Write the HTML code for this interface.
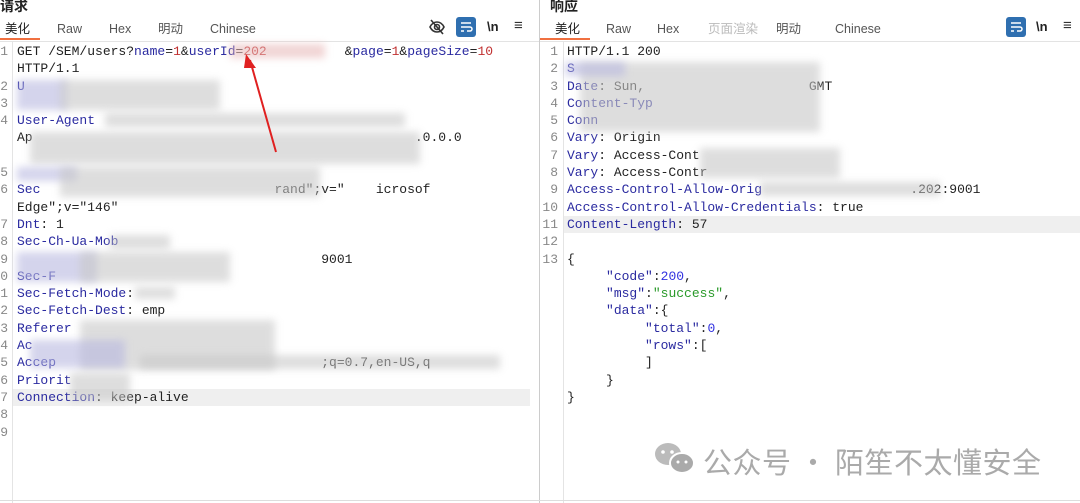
<!DOCTYPE html><html><head><meta charset="utf-8"><style>
*{margin:0;padding:0;box-sizing:border-box}
body{width:1080px;height:503px;background:#fff;position:relative;overflow:hidden;font-family:"Liberation Sans","Noto Sans CJK SC",sans-serif}
.t{position:absolute;font-size:14px;font-weight:bold;color:#222;top:-4px}
.tab{position:absolute;top:21px;font-size:12.5px;line-height:16px;height:16px;color:#555}
.ul{position:absolute;top:38px;height:2px;background:#f07040}
.hl{position:absolute;height:1px;background:#e3e3e3}
.code{position:absolute;font-family:"Liberation Mono",monospace;font-size:13px;line-height:17.3px;color:#222;white-space:pre}
.num{position:absolute;font-family:"Liberation Mono",monospace;font-size:13px;line-height:17.3px;color:#888;white-space:pre;text-align:right}
.k{color:#2a2aa0}.r{color:#c03030}.g{color:#2a9a2a}.b{color:#3030e0}
.bl{position:absolute;background:#c8c8c8;filter:blur(4px);opacity:.6}
.bb{position:absolute;background:#b8b8e0;filter:blur(4px);opacity:.6}
</style></head><body>
<div class="t" style="left:0">请求</div>
<div class="t" style="left:550px">响应</div>
<div class="tab" style="left:5px;color:#222">美化</div><div class="tab" style="left:57px">Raw</div><div class="tab" style="left:109px">Hex</div><div class="tab" style="left:158px">明动</div><div class="tab" style="left:210px">Chinese</div>
<div class="ul" style="left:0;width:40px"></div>
<div class="tab" style="left:555px;color:#222">美化</div><div class="tab" style="left:606px">Raw</div><div class="tab" style="left:657px">Hex</div><div class="tab" style="left:708px;color:#bbb">页面渲染</div><div class="tab" style="left:776px">明动</div><div class="tab" style="left:835px">Chinese</div>
<div class="ul" style="left:540px;width:50px"></div>
<div class="hl" style="left:0;top:41px;width:1080px"></div>
<svg style="position:absolute;left:428px;top:18px" width="18" height="18" viewBox="0 0 18 18"><path d="M2 9c2-4 5-5 7-5s5 1 7 5c-2 4-5 5-7 5S4 13 2 9z" fill="none" stroke="#333" stroke-width="1.6"/><circle cx="9" cy="9" r="2.5" fill="none" stroke="#333" stroke-width="1.6"/><path d="M3 2l12 14" stroke="#333" stroke-width="1.6"/></svg>
<svg style="position:absolute;left:456px;top:17px" width="20" height="20"><rect width="20" height="20" rx="3" fill="#2f6fb0"/><path d="M5 6h10M5 10h9a2 2 0 0 1 0 4h-3M5 14h3" stroke="#fff" stroke-width="1.5" fill="none"/></svg>
<div style="position:absolute;left:487px;top:19px;font-size:13px;font-weight:bold;color:#222">\n</div>
<div style="position:absolute;left:514px;top:17px;font-size:15px;color:#333">≡</div>
<svg style="position:absolute;left:1006px;top:17px" width="20" height="20"><rect width="20" height="20" rx="3" fill="#2f6fb0"/><path d="M5 6h10M5 10h9a2 2 0 0 1 0 4h-3M5 14h3" stroke="#fff" stroke-width="1.5" fill="none"/></svg>
<div style="position:absolute;left:1036px;top:19px;font-size:13px;font-weight:bold;color:#222">\n</div>
<div style="position:absolute;left:1063px;top:17px;font-size:15px;color:#333">≡</div>
<div style="position:absolute;left:539px;top:0;width:1px;height:503px;background:#ccc"></div>
<div style="position:absolute;left:12px;top:42px;width:1px;height:461px;background:#e4e4e4"></div>
<div style="position:absolute;left:563px;top:42px;width:1px;height:461px;background:#e4e4e4"></div>
<div style="position:absolute;left:0;top:500px;width:1080px;height:1px;background:#ddd"></div>
<div style="position:absolute;left:13px;top:389px;width:517px;height:17px;background:#efefef"></div>
<div style="position:absolute;left:564px;top:216px;width:516px;height:17px;background:#efefef"></div>
<div class="num" style="left:-2px;top:43px;width:10px">1

2
3
4


5
6

7
8
9
0
1
2
3
4
5
6
7
8
9</div>
<div class="code" style="left:17px;top:43px">GET /SEM/users?<span class="k">name</span>=<span class="r">1</span>&amp;<span class="k">userId</span>=<span class="r">202</span>          &amp;<span class="k">page</span>=<span class="r">1</span>&amp;<span class="k">pageSize</span>=<span class="r">10</span>
HTTP/1.1
<span class="k">U</span>

<span class="k">User-Agent</span>
Ap                                                 .0.0.0


<span class="k">Sec</span>                              rand";v="    icrosof
Edge";v="146"
<span class="k">Dnt</span>: 1
<span class="k">Sec-Ch-Ua-Mob</span>
                                       9001
<span class="k">Sec-F</span>
<span class="k">Sec-Fetch-Mode</span>:
<span class="k">Sec-Fetch-Dest</span>: emp
<span class="k">Referer</span>
<span class="k">Ac</span>
<span class="k">Accep</span>                                  ;q=0.7,en-US,q
<span class="k">Priorit</span>
<span class="k">Connection</span>: keep-alive</div>
<div class="bl" style="left:230px;top:44px;width:95px;height:14px;background:#e8b8b8"></div>
<div class="bb" style="left:17px;top:80px;width:50px;height:30px"></div>
<div class="bl" style="left:60px;top:80px;width:160px;height:30px"></div>
<div class="bl" style="left:105px;top:113px;width:300px;height:14px"></div>
<div class="bl" style="left:30px;top:132px;width:390px;height:32px"></div>
<div class="bb" style="left:17px;top:167px;width:60px;height:14px"></div>
<div class="bl" style="left:60px;top:167px;width:260px;height:30px"></div>
<div class="bl" style="left:110px;top:235px;width:60px;height:14px"></div>
<div class="bb" style="left:17px;top:252px;width:80px;height:30px"></div>
<div class="bl" style="left:80px;top:252px;width:150px;height:30px"></div>
<div class="bl" style="left:135px;top:287px;width:40px;height:12px"></div>
<div class="bl" style="left:80px;top:320px;width:195px;height:50px"></div>
<div class="bb" style="left:30px;top:340px;width:95px;height:28px"></div>
<div class="bl" style="left:140px;top:355px;width:360px;height:14px"></div>
<div class="bl" style="left:70px;top:373px;width:60px;height:28px"></div>
<svg style="position:absolute;left:238px;top:52px" width="50" height="105"><path d="M38 100L12 8" stroke="#e02020" stroke-width="2"/><path d="M8 2l10 14-12 0z" fill="#e02020"/></svg>
<div class="num" style="left:540px;top:43px;width:18px">1
2
3
4
5
6
7
8
9
10
11
12
13</div>
<div class="code" style="left:567px;top:43px">HTTP/1.1 200
<span class="k">S</span>
<span class="k">Date</span>: Sun,                     GMT
<span class="k">Content-Typ</span>
<span class="k">Conn</span>
<span class="k">Vary</span>: Origin
<span class="k">Vary</span>: Access-Cont
<span class="k">Vary</span>: Access-Contr
<span class="k">Access-Control-Allow-Orig</span>                   .202:9001
<span class="k">Access-Control-Allow-Credentials</span>: true
<span class="k">Content-Length</span>: 57

{
     <span class="k">"code"</span>:<span class="b">200</span>,
     <span class="k">"msg"</span>:<span class="g">"success"</span>,
     <span class="k">"data"</span>:{
          <span class="k">"total"</span>:<span class="b">0</span>,
          <span class="k">"rows"</span>:[
          ]
     }
}</div>
<div class="bl" style="left:580px;top:62px;width:240px;height:70px"></div>
<div class="bb" style="left:565px;top:62px;width:60px;height:14px"></div>
<div class="bl" style="left:700px;top:148px;width:140px;height:30px"></div>
<div class="bl" style="left:760px;top:182px;width:180px;height:14px"></div>
<svg style="position:absolute;left:653px;top:441px" width="44" height="36"><ellipse cx="15" cy="13" rx="13" ry="11" fill="#bbb"/><ellipse cx="29" cy="22" rx="12" ry="10" fill="#aaa" stroke="#fff" stroke-width="2"/><circle cx="10" cy="11" r="1.8" fill="#fff"/><circle cx="19" cy="11" r="1.8" fill="#fff"/><circle cx="25" cy="21" r="1.5" fill="#fff"/><circle cx="33" cy="21" r="1.5" fill="#fff"/></svg>
<div style="position:absolute;left:703px;top:441px;font-size:29px;color:#aaa;font-family:'Noto Sans CJK SC',sans-serif;letter-spacing:0.5px;line-height:40px">公众号 · 陌笙不太懂安全</div>
</body></html>
